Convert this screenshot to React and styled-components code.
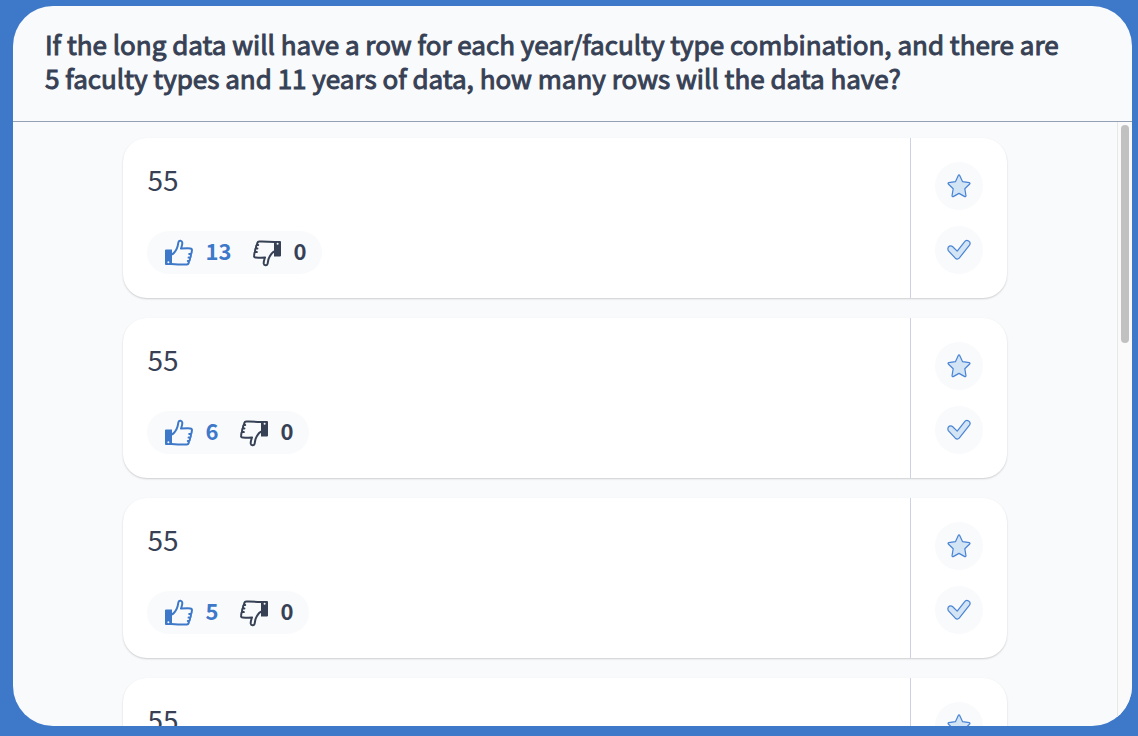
import React, { useState } from "react";
import styled, { createGlobalStyle } from "styled-components";

const GlobalStyle = createGlobalStyle`
  * { box-sizing: border-box; }
  body {
    margin: 0;
    background: #3d78c9;
    color: #374155;
    font-family: "Source Sans Pro", "Noto Sans CJK JP", sans-serif;
  }
  button { font: inherit; color: inherit; border: 0; cursor: pointer; }
`;

const Page = styled.div`
  display: flex;
  height: 100vh;
  padding: 6px 6px 10px 13px;
`;

const Panel = styled.main`
  flex: 1;
  display: flex;
  flex-direction: column;
  overflow: hidden;
  border-radius: 40px;
  background: #f9fafc;
`;

const Header = styled.header`
  padding: 21px 64px 26px 32px;
  border-bottom: 1px solid #94a0b3;
`;

const Question = styled.h1`
  margin: 0;
  font-size: 26px;
  font-weight: 400;
  line-height: 34px;
  -webkit-text-stroke: 1px currentColor;
`;

const Body = styled.div`
  flex: 1;
  display: flex;
  min-height: 0;
`;

const Answers = styled.ul`
  flex: 1;
  display: flex;
  flex-direction: column;
  align-items: center;
  gap: 20px;
  margin: 0;
  padding: 16px 0;
  overflow-y: auto;
  scrollbar-width: none;
  list-style: none;
`;

const ScrollTrack = styled.div`
  width: 15px;
  padding: 3px;
  border-left: 1px solid #e7e7e7;
  background: #fafafa;
`;

const ScrollThumb = styled.div`
  width: 8px;
  height: 36.5%;
  border-radius: 4px;
  background: #c1c1c1;
`;

const Card = styled.li`
  flex: none;
  display: flex;
  width: 80%;
  border-radius: 24px;
  background: #fff;
  box-shadow: 0 1px 2px rgba(0, 0, 0, 0.18);
`;

const Content = styled.div`
  flex: 1;
  display: flex;
  flex-direction: column;
  align-items: flex-start;
  justify-content: space-between;
  padding: 24px;
`;

const Answer = styled.p`
  margin: 0;
  font-size: 28px;
  line-height: 34px;
`;

const Votes = styled.div`
  display: flex;
  gap: 22px;
  height: 43px;
  padding: 0 16px 0 18px;
  border-radius: 22px;
  background: #f9fafc;
`;

const VoteButton = styled.button`
  display: flex;
  align-items: center;
  gap: 12px;
  padding: 0;
  background: none;
  && {
    color: ${(p) => (p.$active ? "#3d78c9" : "#374155")};
  }
`;

const Count = styled.span`
  padding-bottom: 6px;
  font-size: 22px;
  font-weight: 700;
  line-height: 32px;
`;

const Actions = styled.div`
  display: flex;
  flex-direction: column;
  gap: 16px;
  padding: 24px;
  border-left: 1px solid #cbd2e1;
`;

const RoundButton = styled.button`
  display: grid;
  place-items: center;
  width: 48px;
  height: 48px;
  padding: 0;
  border-radius: 50%;
  background: #f9fafc;
`;

function Thumb({ down }) {
  return (
    <svg width="28" height="28" viewBox="0 0 28 28" fill="none" aria-hidden="true">
      <g transform={down ? "rotate(180 14 14)" : undefined}>
        <path
          fill="currentColor"
          fillRule="evenodd"
          d="M1 10.500H7V26H1a1 1 0 0 1-1-1V11.500a1 1 0 0 1 1-1ZM3.400 22.200a1 1 0 1 0 0 2 1 1 0 0 0 0-2Z"
        />
        <path
          stroke="currentColor"
          strokeWidth="2"
          strokeLinejoin="round"
          strokeLinecap="round"
          d="M6.500 15.500c2.600-.7 3.900-3.400 5.200-5.800 1.400-2.300 1.200-4.700 1.800-6.700.6-2.100 3.500-1.600 3.800.6.2 2.100-.7 4-1.300 6 3-.2 6.200-.4 9.200-.2 1.500.1 1.900 1.100 1.700 2.200l-.4 2.600-.8.800.3.700-.3 2.200-.9.800.3.700-.4 2-.8.700.1.700-.4 1.300c-.3 1-.8 1.300-1.800 1.300-5.500.1-10.300-.1-15.300-.5M25.500 15l-1.300-.1M24.900 18.700l-1.300-.1M24 22.100l-1.200-.1"
        />
      </g>
    </svg>
  );
}

function Star() {
  return (
    <svg width="24" height="24" viewBox="0 0 24 24" aria-hidden="true">
      <path
        fill="#d3e4f4"
        stroke="#4a84d4"
        strokeWidth="1.2"
        strokeLinejoin="round"
        d="M11.300 1.400q.7-1 1.400 0l2.900 6.300 6.700.9q1.100.4.4 1.400l-4.900 4.700 1.200 7.100q-.1 1.100-1.200.8L12 19.400l-5.800 3.200q-1.100.3-1.200-.8l1.200-7.100L1.300 10q-.7-1 .4-1.400l6.700-.9Z"
      />
    </svg>
  );
}

function Check() {
  return (
    <svg width="24" height="24" viewBox="0 0 24 24" aria-hidden="true">
      <path
        fill="#d3e4f4"
        stroke="#4a84d4"
        strokeWidth="1.2"
        strokeLinejoin="round"
        d="M.900 10.800a2.800 2.800 0 0 1 4.600-2.300L10.200 13.200l7.300-9.300a2.900 2.900 0 0 1 5 3.200L12.200 20.200q-1.900 1.900-3.900 0L1.500 12.900Q.800 12 .900 10.800Z"
      />
    </svg>
  );
}

function AnswerCard({ text, up, down }) {
  const [vote, setVote] = useState("up");
  return (
    <Card>
      <Content>
        <Answer>{text}</Answer>
        <Votes>
          <VoteButton type="button" $active={vote === "up"} onClick={() => setVote("up")} aria-label={`Upvote, ${up}`}>
            <Thumb />
            <Count>{up}</Count>
          </VoteButton>
          <VoteButton type="button" $active={vote === "down"} onClick={() => setVote("down")} aria-label={`Downvote, ${down}`}>
            <Thumb down />
            <Count>{down}</Count>
          </VoteButton>
        </Votes>
      </Content>
      <Actions>
        <RoundButton type="button" aria-label="Star answer">
          <Star />
        </RoundButton>
        <RoundButton type="button" aria-label="Mark as answered">
          <Check />
        </RoundButton>
      </Actions>
    </Card>
  );
}

const answers = [
  { id: 1, text: "55", up: 13, down: 0 },
  { id: 2, text: "55", up: 6, down: 0 },
  { id: 3, text: "55", up: 5, down: 0 },
  { id: 4, text: "55", up: 5, down: 0 },
];

export default function App() {
  return (
    <>
      <GlobalStyle />
      <Page>
        <Panel>
          <Header>
            <Question>
              If the long data will have a row for each year/faculty type combination, and there are 5 faculty
              types and 11 years of data, how many rows will the data have?
            </Question>
          </Header>
          <Body>
            <Answers>
              {answers.map((a) => (
                <AnswerCard key={a.id} text={a.text} up={a.up} down={a.down} />
              ))}
            </Answers>
            <ScrollTrack>
              <ScrollThumb />
            </ScrollTrack>
          </Body>
        </Panel>
      </Page>
    </>
  );
}
